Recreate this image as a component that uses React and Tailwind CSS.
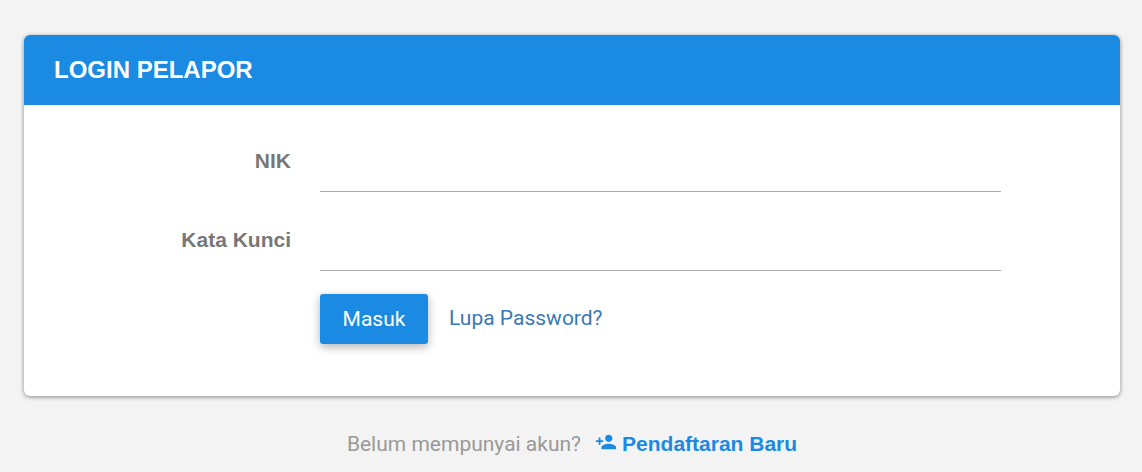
import { MdPersonAdd } from "react-icons/md";

function Field({ id, label, type }) {
  return (
    <div className="grid grid-cols-[267px_1fr] gap-x-[29px]">
      <label htmlFor={id} className="pt-3 text-right font-['Liberation_Sans',sans-serif] text-[21px] font-bold leading-6 text-[#777]">
        {label}
      </label>
      <input id={id} type={type} className="h-[55px] w-full border-b border-[#aaa] bg-transparent px-1 text-[21px] text-[#555] outline-none" />
    </div>
  );
}

export default function App() {
  return (
    <main className="min-h-screen bg-[#f3f3f3] pt-[35px] pr-[22px] pl-6 font-[Roboto,sans-serif] text-[21px]">
      <section className="overflow-hidden rounded-md bg-white shadow-[0_1px_4px_rgba(0,0,0,0.45)]">
        <h1 className="bg-[#1a8ae2] px-[30px] py-[19px] font-['Liberation_Sans',sans-serif] text-[24px] font-bold leading-8 text-white">
          LOGIN PELAPOR
        </h1>
        <form className="pt-8 pr-[119px] pb-[52px]" onSubmit={(e) => e.preventDefault()}>
          <div className="flex flex-col gap-6">
            <Field id="nik" label="NIK" type="text" />
            <Field id="password" label="Kata Kunci" type="password" />
          </div>
          <div className="mt-[23px] ml-[296px] flex items-center gap-[21px]">
            <button type="submit" className="h-[50px] min-w-[108px] rounded-[3px] bg-[#1a8ae2] px-[22px] pt-0.5 text-white shadow-[0_3px_10px_rgba(0,0,0,0.3)]">
              Masuk
            </button>
            <a href="#lupa" className="text-[#3a78b5]">Lupa Password?</a>
          </div>
        </form>
      </section>
      <p className="mt-8 flex items-center justify-center gap-[14px] leading-8 text-[#999]">
        Belum mempunyai akun?
        <a href="#daftar" className="flex items-center gap-[5px] font-['Liberation_Sans',sans-serif] font-bold text-[#1a8ae2]">
          <MdPersonAdd className="mb-1 size-[22px]" aria-hidden="true" />
          Pendaftaran Baru
        </a>
      </p>
    </main>
  );
}
